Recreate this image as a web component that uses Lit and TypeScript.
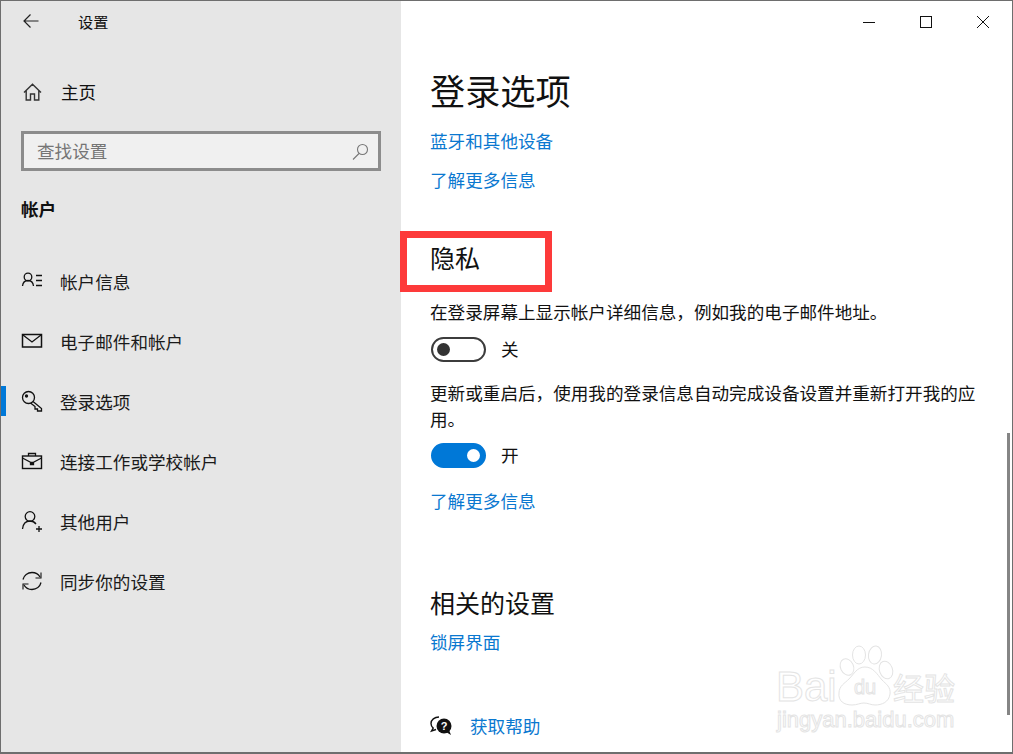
import { LitElement, html, css, svg } from "lit";
import { customElement } from "lit/decorators.js";

const ic = (w: number, h: number, body: unknown) => html`<svg width=${w} height=${h} viewBox="0 0 ${w} ${h}" fill="none" stroke="#111" stroke-width="1.300">${body}</svg>`;

const navItems = [
  { label: "帐户信息", icon: ic(22, 20, svg`<circle cx="7" cy="6" r="3.800"/><path d="M1.500 15c.4-3.500 2.600-5.500 5.500-5.500s5.100 2 5.500 5.500M15 4.500h6M15 9.500h6M15 14.500h6"/>`) },
  { label: "电子邮件和帐户", icon: ic(22, 20, svg`<rect x="1.500" y="3.500" width="19" height="12.500" stroke-width="1.500"/><path d="M2 4l9 7 9-7" />`) },
  { label: "登录选项", selected: true, icon: ic(22, 22, svg`<circle cx="7.500" cy="7.500" r="6" stroke-width="1.300"/><circle cx="5.500" cy="6" r="1" fill="#222"/><path d="M12 11.500l8.500 7v2.500h-4v-2h-2.500v-2.500l-4.500-3.500" stroke-width="1.300"/>`) },
  { label: "连接工作或学校帐户", icon: ic(22, 20, svg`<rect x="1.500" y="5" width="19" height="12.500" stroke-width="1.400"/><path d="M7.500 5V2.500h7V5M1.500 7l9.500 5 9.500-5M9.500 11.500h3v2h-3z"/>`) },
  { label: "其他用户", icon: ic(22, 22, svg`<circle cx="9" cy="6.500" r="4.800" stroke-width="1.300"/><path d="M1.500 19c.5-5 3.500-8 7.500-8 2.500 0 4.500 1 6 3M18 16v6M15 19h6" stroke-width="1.300"/>`) },
  { label: "同步你的设置", icon: ic(22, 22, svg`<path d="M2 9.500C3 5.500 6.500 2.500 11 2.500c3.500 0 6.500 1.800 8 4.500M20 12.500c-1 4-4.500 7-9 7-3.500 0-6.500-1.800-8-4.500" stroke-width="1.300"/><path d="M20 2.500V8h-5.500M2 19.500V14h5.500" stroke-width="1.100" stroke-linejoin="miter"/>`) },
];

@customElement("app-root")
export class AppRoot extends LitElement {
  static styles = css`
    :host {
      display: block;
      width: 1013px;
      height: 754px;
      font-family: "Noto Sans CJK SC", "Noto Sans", sans-serif;
      font-size: 17.6px;
      color: #111;
    }
    .window {
      position: relative;
      box-sizing: border-box;
      width: 1013px;
      height: 754px;
      display: flex;
      overflow: hidden;
      border: 1px solid #6e6e6e;
      border-bottom-width: 2px;
      background: #fff;
    }
    .side {
      width: 400px;
      flex: none;
      background: #e6e6e6;
      display: flex;
      flex-direction: column;
    }
    .topbar {
      height: 40px;
      display: flex;
      align-items: center;
      padding-left: 22px;
      font-size: 15.2px;
      line-height: 40px;
    }
    .back { width: 55px; display: flex; }
    .home {
      margin-top: 31px;
      height: 40px;
      display: flex;
      align-items: center;
      padding-left: 22px;
      gap: 19px;
      line-height: 40px;
    }
    .search {
      box-sizing: border-box;
      margin: 19px 0 0 20px;
      width: 360px;
      height: 40px;
      border: 3px solid #8c8c8c;
      background: #f0f0f0;
      display: flex;
      align-items: center;
      justify-content: space-between;
      padding: 0 9px 0 13px;
      color: #757575;
      line-height: 34px;
    }
    .section {
      margin: 18px 0 0 20px;
      height: 40px;
      line-height: 40px;
      font-weight: 700;
    }
    .nav { margin-top: 22px; display: flex; flex-direction: column; }
    .item {
      height: 60px;
      display: flex;
      align-items: center;
      gap: 17px;
      padding-left: 20px;
      position: relative;
      color: #1a1a1a;
    }
    .item svg { flex: none; }
    .item.selected::before {
      content: "";
      position: absolute;
      left: 0;
      top: 15px;
      width: 5px;
      height: 30px;
      background: #0078d7;
    }
    .main {
      flex: 1;
      padding: 64px 0 0 29px;
      display: flex;
      flex-direction: column;
      line-height: 26px;
    }
    h1 { margin: 0; font-size: 35.2px; font-weight: 400; line-height: 50px; height: 50px; }
    h2 { margin: 0; font-size: 25px; font-weight: 400; line-height: 36px; height: 36px; }
    p { margin: 0; width: 560px; color: #111; }
    .link { color: #0a78d0; height: 26px; }
    .m9 { margin-top: 9px; }
    .m10 { margin-top: 10px; }
    .m11 { margin-top: 11px; }
    .m13 { margin-top: 13px; }
    .m18 { margin-top: 18px; }
    .m20 { margin-top: 20px; }
    .m24 { margin-top: 24px; }
    .m46 { margin-top: 46px; }
    .m58 { margin-top: 58px; }
    .m70 { margin-top: 70px; }
    .toggle-row { display: flex; align-items: center; height: 26px; gap: 15px; padding-left: 1px; }
    .toggle {
      box-sizing: border-box;
      width: 55px;
      height: 25px;
      border-radius: 13px;
      border: 2px solid #3c3c3c;
      display: flex;
      align-items: center;
      padding: 0 4px;
    }
    .toggle .knob { width: 13px; height: 13px; border-radius: 50%; background: #333; }
    .toggle.on { background: #0078d7; border-color: #0078d7; justify-content: flex-end; }
    .toggle.on .knob { background: #fff; }
    .help { display: flex; align-items: center; gap: 18px; height: 26px; }
    .controls {
      position: absolute;
      top: 0;
      right: 1px;
      display: flex;
    }
    .controls div { width: 57px; height: 42px; display: flex; align-items: center; justify-content: center; }
    .annot {
      position: absolute;
      box-sizing: border-box;
      left: 399px;
      top: 230px;
      width: 152px;
      height: 61px;
      border: 7px solid #fd3a3a;
    }
    .scroll {
      position: absolute;
      left: 1006px;
      top: 432px;
      width: 3px;
      height: 282px;
      background: #858585;
    }
    .wm {
      position: absolute;
      left: 775px;
      top: 643px;
      width: 190px;
      height: 90px;
      color: #fff;
      -webkit-text-stroke: 1px #e4e4e4;
      font-family: "Liberation Sans", sans-serif;
      pointer-events: none;
    }
    .wm svg { position: absolute; left: 0; top: 0; }
    .wm span { position: absolute; white-space: nowrap; }
    .wm .b1 { left: 0; top: 20px; font-size: 42px; line-height: 46px; }
    .wm .b2 { left: 78px; top: 33px; font-size: 20px; line-height: 20px; }
    .wm .b3 { left: 117px; top: 24px; font-size: 31px; line-height: 38px; font-family: "Noto Sans CJK SC", sans-serif; }
    .wm .b4 { left: 1px; top: 64px; font-size: 22px; line-height: 24px; }
  `;

  render() {
    return html`
      <div class="window">
        <aside class="side">
          <div class="topbar">
            <span class="back"><svg width="16" height="14" viewBox="0 0 16 14" fill="none" stroke="#222" stroke-width="1.200"><path d="M15.500 7H1M7.500 .5L1 7l6.500 6.500"/></svg></span>
            <span>设置</span>
          </div>
          <div class="home">
            <svg width="19" height="18" viewBox="0 0 19 18" fill="none" stroke="#333" stroke-width="1.400"><path d="M1 9.500L9.500 1.200 18 9.500M3.200 7.500V17h4.300v-6h4v6h4.300V7.500"/></svg>
            <span>主页</span>
          </div>
          <div class="search">
            <span>查找设置</span>
            <svg width="17" height="17" viewBox="0 0 17 17" fill="none" stroke="#777" stroke-width="1.100"><circle cx="10.500" cy="6.500" r="5"/><path d="M7 10.500L1 16.500"/></svg>
          </div>
          <div class="section">帐户</div>
          <nav class="nav">
            ${navItems.map(
              (n) => html`<div class="item ${n.selected ? "selected" : ""}">${n.icon}<span>${n.label}</span></div>`
            )}
          </nav>
        </aside>
        <main class="main">
          <h1>登录选项</h1>
          <div class="link m13">蓝牙和其他设备</div>
          <div class="link m13">了解更多信息</div>
          <h2 class="m46">隐私</h2>
          <p class="m24">在登录屏幕上显示帐户详细信息，例如我的电子邮件地址。</p>
          <div class="toggle-row m11"><span class="toggle"><span class="knob"></span></span><span>关</span></div>
          <p class="m18">更新或重启后，使用我的登录信息自动完成设备设置并重新打开我的应用。</p>
          <div class="toggle-row m10"><span class="toggle on"><span class="knob"></span></span><span>开</span></div>
          <div class="link m20">了解更多信息</div>
          <h2 class="m70">相关的设置</h2>
          <div class="link m9">锁屏界面</div>
          <div class="help m58">
            <svg width="22" height="20" viewBox="0 0 22 20"><path d="M9 1C4.500 1 1 3.800 1 7.500c0 1.800.8 3.400 2.200 4.600L1.500 15l4.500-1.500" fill="#fff" stroke="#111" stroke-width="1.400"/><circle cx="14" cy="10" r="7.500" fill="#111"/><path d="M16 16l5 3-2-5z" fill="#111"/><text x="14" y="14" font-size="11" font-weight="700" text-anchor="middle" fill="#fff" font-family="Liberation Sans">?</text></svg>
            <span class="link">获取帮助</span>
          </div>
        </main>
        <div class="controls">
          <div><svg width="12" height="12" viewBox="0 0 12 12" stroke="#111"><path d="M0 6.500h12"/></svg></div>
          <div><svg width="12" height="12" viewBox="0 0 12 12" fill="none" stroke="#111"><rect x=".5" y=".5" width="11" height="11"/></svg></div>
          <div><svg width="12" height="12" viewBox="0 0 12 12" stroke="#111"><path d="M0 0l12 12M12 0L0 12"/></svg></div>
        </div>
        <div class="annot"></div>
        <div class="scroll"></div>
        <div class="wm">
          <svg width="190" height="90" viewBox="0 0 190 90" fill="#fff" stroke="#e4e4e4" stroke-width="1">
            <ellipse cx="71" cy="23" rx="6.500" ry="8.500" transform="rotate(-25 71 23)"/>
            <ellipse cx="83" cy="11" rx="6.500" ry="9"/>
            <ellipse cx="99" cy="11" rx="6.500" ry="9" transform="rotate(8 99 11)"/>
            <ellipse cx="110" cy="26" rx="6.500" ry="9" transform="rotate(-20 110 26)"/>
            <path d="M89 23c8 0 12 7 17 13 4 4 9 7 8 14-1 8-8 11-15 11-4 0-7-2-11-2s-7 2-12 2c-8 0-14-4-13-12 0-7 6-10 10-14 5-5 8-12 16-12z"/>
          </svg>
          <span class="b1">Bai</span>
          <span class="b2">du</span>
          <span class="b3">经验</span>
          <span class="b4">jingyan.baidu.com</span>
        </div>
      </div>
    `;
  }
}
